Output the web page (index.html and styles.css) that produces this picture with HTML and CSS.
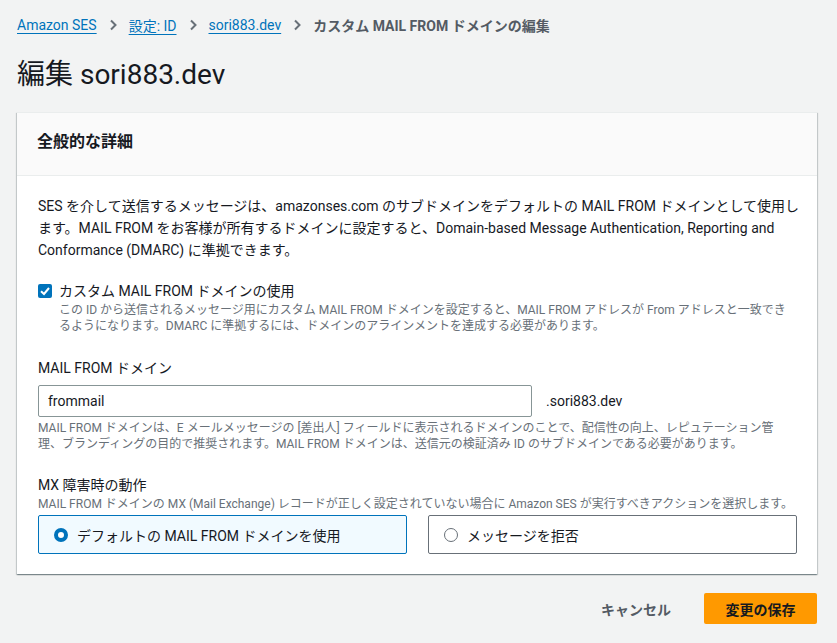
FILE: index.html
```html
<!DOCTYPE html>
<html lang="ja">
<head>
<meta charset="utf-8">
<title>カスタム MAIL FROM ドメインの編集</title>
<link rel="stylesheet" href="styles.css">
</head>
<body>
<div class="page">
  <nav class="crumbs">
    <a class="crumb-link" href="#">Amazon SES</a>
    <svg class="chev" width="14" height="14" viewBox="0 0 14 14"><path d="M5 2.5 L9.5 7 L5 11.5" fill="none" stroke="#687078" stroke-width="2"/></svg>
    <a class="crumb-link" href="#">設定: ID</a>
    <svg class="chev" width="14" height="14" viewBox="0 0 14 14"><path d="M5 2.5 L9.5 7 L5 11.5" fill="none" stroke="#687078" stroke-width="2"/></svg>
    <a class="crumb-link" href="#">sori883.dev</a>
    <svg class="chev" width="14" height="14" viewBox="0 0 14 14"><path d="M5 2.5 L9.5 7 L5 11.5" fill="none" stroke="#687078" stroke-width="2"/></svg>
    <span class="crumb-current">カスタム MAIL FROM ドメインの編集</span>
  </nav>

  <h1 class="title">編集 sori883.dev</h1>

  <section class="card">
    <header class="card-head">
      <h2 class="card-title">全般的な詳細</h2>
    </header>
    <div class="card-body">
      <p class="intro">SES を介して送信するメッセージは、amazonses.com のサブドメインをデフォルトの MAIL FROM ドメインとして使用します。MAIL FROM をお客様が所有するドメインに設定すると、Domain-based Message Authentication, Reporting and Conformance (DMARC) に準拠できます。</p>

      <div class="check-row">
        <span class="checkbox">
          <svg width="14" height="14" viewBox="0 0 14 14"><path d="M3 7.2 L6 10 L11 4" fill="none" stroke="#fff" stroke-width="2"/></svg>
        </span>
        <div class="check-text">
          <div class="check-label">カスタム MAIL FROM ドメインの使用</div>
          <div class="desc">この ID から送信されるメッセージ用にカスタム MAIL FROM ドメインを設定すると、MAIL FROM アドレスが From アドレスと一致できるようになります。DMARC に準拠するには、ドメインのアラインメントを達成する必要があります。</div>
        </div>
      </div>

      <div class="field">
        <div class="field-label">MAIL FROM ドメイン</div>
        <div class="input-row">
          <div class="input">frommail</div>
          <span class="suffix">.sori883.dev</span>
        </div>
        <div class="desc help">MAIL FROM ドメインは、E メールメッセージの [差出人] フィールドに表示されるドメインのことで、配信性の向上、レピュテーション管理、ブランディングの目的で推奨されます。MAIL FROM ドメインは、送信元の検証済み ID のサブドメインである必要があります。</div>
      </div>

      <div class="field mx">
        <div class="field-label">MX 障害時の動作</div>
        <div class="desc">MAIL FROM ドメインの MX (Mail Exchange) レコードが正しく設定されていない場合に Amazon SES が実行すべきアクションを選択します。</div>
        <div class="radios">
          <div class="radio-card selected">
            <span class="radio on"></span>
            <span>デフォルトの MAIL FROM ドメインを使用</span>
          </div>
          <div class="radio-card">
            <span class="radio"></span>
            <span>メッセージを拒否</span>
          </div>
        </div>
      </div>
    </div>
  </section>

  <div class="actions">
    <button class="btn-link">キャンセル</button>
    <button class="btn-primary">変更の保存</button>
  </div>
</div>
</body>
</html>
```

FILE: styles.css
```css
html, body {
  margin: 0;
  padding: 0;
  background: #f2f3f3;
}
body {
  font-family: Roboto, "Noto Sans CJK JP", sans-serif;
  color: #16191f;
  font-size: 14px;
}
.page {
  padding: 14px 20px 0 17px;
}
.crumbs {
  display: flex;
  align-items: center;
  gap: 9px;
  height: 22px;
  font-size: 14px;
}
.crumb-link {
  color: #0073bb;
  text-decoration: underline;
  text-underline-offset: 3px;
  text-decoration-thickness: 1px;
}
.chev {
  display: block;
}
.crumb-current {
  color: #545b64;
  font-weight: 700;
}
.title {
  margin: 21px 0 0;
  font-size: 28px;
  line-height: 36px;
  font-weight: 400;
  color: #16191f;
}
.card {
  margin-top: 19px;
  width: 800px;
  background: #fff;
  box-shadow: 0 1px 1px 0 rgba(0,28,36,.3), 1px 1px 1px 0 rgba(0,28,36,.15), -1px 1px 1px 0 rgba(0,28,36,.15);
  border-top: 1px solid #eaeded;
}
.card-head {
  background: #fafafa;
  border-bottom: 1px solid #eaeded;
  padding: 16px 20px 20px;
}
.card-title {
  margin: 0;
  font-size: 16px;
  line-height: 26px;
  font-weight: 700;
}
.card-body {
  padding: 19px 20px 20px 21px;
}
.intro {
  margin: 0 -8px 0 0;
  line-height: 22px;
}
.check-row {
  display: flex;
  gap: 7px;
  margin-top: 19px;
}
.checkbox {
  flex: none;
  width: 14px;
  height: 14px;
  margin-top: 4px;
  background: #0073bb;
  border-radius: 2px;
  display: flex;
}
.check-label {
  line-height: 22px;
}
.desc {
  font-size: 12px;
  line-height: 16px;
  color: #687078;
}
.field {
  margin-top: 23px;
}
.field-label {
  line-height: 22px;
}
.input-row {
  display: flex;
  align-items: center;
  gap: 14px;
  margin-top: 6px;
}
.input {
  box-sizing: border-box;
  width: 494px;
  height: 32px;
  border: 1px solid #879596;
  border-radius: 2px;
  padding: 0 9px;
  line-height: 30px;
  font-size: 14px;
}
.help {
  margin-top: 3px;
  max-width: 750px;
}
.mx {
  margin-top: 22px;
}
.radios {
  display: grid;
  grid-template-columns: 1fr 1fr;
  gap: 21px;
  margin-top: 3px;
}
.radio-card {
  box-sizing: border-box;
  height: 39px;
  border: 1px solid #687078;
  border-radius: 2px;
  display: flex;
  align-items: center;
  gap: 9px;
  padding: 0 15px;
}
.radio-card.selected {
  border-color: #0073bb;
  background: #f1faff;
}
.radio {
  box-sizing: border-box;
  width: 14px;
  height: 14px;
  border-radius: 50%;
  border: 1px solid #687078;
  background: #fff;
}
.radio.on {
  border: 4px solid #0073bb;
}
.actions {
  width: 800px;
  display: flex;
  justify-content: flex-end;
  align-items: center;
  gap: 33px;
  margin-top: 19px;
}
.btn-link {
  background: none;
  border: none;
  font: inherit;
  font-weight: 700;
  color: #545b64;
  padding: 0;
}
.btn-primary {
  font: inherit;
  font-weight: 700;
  background: #ff9900;
  color: #16191f;
  border: none;
  border-radius: 2px;
  width: 113px;
  height: 31px;
}
```
